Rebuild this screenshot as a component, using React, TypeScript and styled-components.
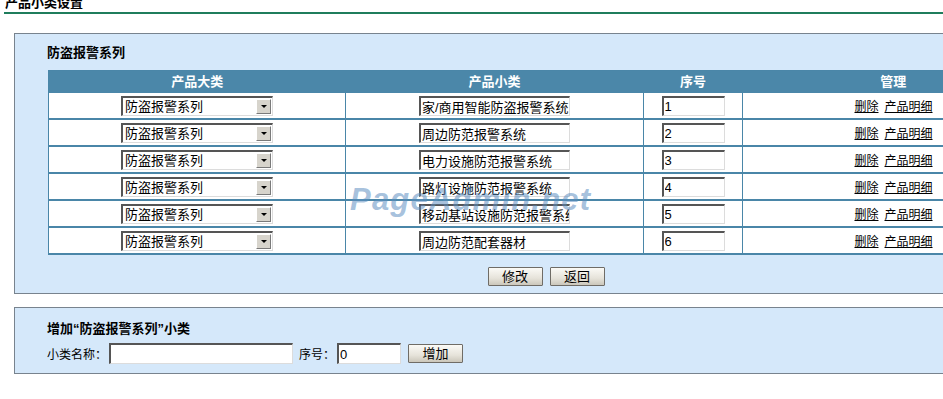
import React from 'react';
import styled, { createGlobalStyle } from 'styled-components';

const GlobalStyle = createGlobalStyle`
  html, body {
    margin: 0;
    padding: 0;
    overflow: hidden;
    background: #ffffff;
  }
  body {
    font-family: "Liberation Sans", "Noto Sans CJK SC", sans-serif;
    font-size: 12px;
    color: #000;
  }
`;

const Page = styled.div`
  width: 1100px;
  position: relative;
`;

const PageTitle = styled.div`
  margin-left: 4px;
  height: 12px;
  border-bottom: 2px solid #1f7d5c;
  font-size: 13px;
  font-weight: bold;
  line-height: 12px;
  overflow: hidden;

  span {
    display: block;
    margin-top: -3px;
    margin-left: 1px;
  }
`;

const Panel = styled.div<{ $top: number; $padTop: number; $padBottom: number }>`
  position: relative;
  margin: ${(p) => p.$top}px 0 0 14px;
  width: 1062px;
  border: 1px solid #78838e;
  background: #d5e8fa;
  padding: ${(p) => p.$padTop}px 32px ${(p) => p.$padBottom}px 32px;
  box-sizing: content-box;
`;

const PanelInner = styled.div`
  width: 996px;
  margin-left: 1px;
`;

const SectionTitle = styled.div`
  font-size: 13px;
  font-weight: bold;
  line-height: 13px;
  height: 13px;
  margin-left: -1px;
`;

const Grid = styled.table`
  margin-top: 11px;
  width: 996px;
  table-layout: fixed;
  border-collapse: collapse;
  background: #ffffff;
  border: 1px solid #4a86a8;
`;

const HeadCell = styled.th`
  height: 22px;
  padding: 0;
  background: #4b87a9;
  color: #ffffff;
  font-size: 13px;
  font-weight: bold;
  text-align: center;
  vertical-align: middle;
  line-height: 22px;
`;

const Cell = styled.td<{ $last?: boolean }>`
  height: 25px;
  padding: 0;
  text-align: center;
  vertical-align: middle;
  border-bottom: 2px solid #4a86a8;
  border-right: ${(p) => (p.$last ? 'none' : '1px solid #4a86a8')};
`;

const TextBox = styled.input<{ $w: number }>`
  width: ${(p) => p.$w}px;
  height: 20px;
  box-sizing: border-box;
  margin: 0;
  padding: 0 0 0 1px;
  font-family: "Liberation Sans", "Noto Sans CJK SC", sans-serif;
  font-size: 13px;
  color: #000;
  background: #ffffff;
  border-style: solid;
  border-width: 2px 1px 1px 2px;
  border-color: #555555 #dcdcdc #dcdcdc #555555;
  outline: none;
  vertical-align: middle;
`;

const SelectBox = styled.div`
  display: inline-flex;
  align-items: stretch;
  width: 152px;
  height: 20px;
  box-sizing: border-box;
  border-style: solid;
  border-width: 2px 1px 1px 2px;
  border-color: #555555 #dcdcdc #dcdcdc #555555;
  background: #ffffff;
  vertical-align: middle;
  text-align: left;
`;

const SelectText = styled.span`
  flex: 1;
  padding-left: 2px;
  font-size: 13px;
  line-height: 17px;
  white-space: nowrap;
  overflow: hidden;
`;

const SelectArrow = styled.span`
  width: 15px;
  margin: 1px;
  background: #d7d4cc;
  border-style: solid;
  border-width: 1px;
  border-color: #ffffff #7a7a7a #7a7a7a #ffffff;
  box-sizing: border-box;
  display: flex;
  align-items: center;
  justify-content: center;

  &::after {
    content: '';
    border-left: 3px solid transparent;
    border-right: 3px solid transparent;
    border-top: 3px solid #000;
  }
`;

const Link = styled.a`
  color: #000;
  text-decoration: underline;
  font-size: 12px;
  cursor: pointer;
  margin: 0 3px;
`;

const ButtonRow = styled.div`
  margin-top: 12px;
  display: flex;
  justify-content: center;
  gap: 7px;
`;

const Button = styled.button<{ $h?: number; $gap?: number }>`
  width: 55px;
  height: ${(p) => p.$h ?? 19}px;
  margin: 0 0 0 ${(p) => p.$gap ?? 0}px;
  padding: 0;
  box-sizing: border-box;
  font-family: "Liberation Sans", "Noto Sans CJK SC", sans-serif;
  font-size: 13px;
  line-height: 1;
  color: #000;
  background: linear-gradient(#fbfaf6, #e6e3da 60%, #cbc7bb);
  border: 1px solid #6f6c66;
  border-radius: 1px;
  cursor: pointer;
`;

const FormRow = styled.div`
  margin-top: 8px;
  display: flex;
  align-items: center;
  height: 21px;
  margin-left: -1px;
`;

const Label = styled.span<{ $gap?: number }>`
  font-size: 12px;
  margin-left: ${(p) => p.$gap ?? 0}px;
  margin-right: 2px;
  white-space: nowrap;
`;

const FormInput = styled(TextBox)`
  height: 21px;
`;

const Watermark = styled.div`
  position: absolute;
  left: 335px;
  top: 148px;
  font-family: "Liberation Sans", Arial, sans-serif;
  font-size: 31px;
  font-weight: bold;
  font-style: italic;
  letter-spacing: 1.2px;
  color: rgba(92, 142, 192, 0.55);
  pointer-events: none;
  white-space: nowrap;
`;

const rows = [
  { name: '家/商用智能防盗报警系统', order: '1' },
  { name: '周边防范报警系统', order: '2' },
  { name: '电力设施防范报警系统', order: '3' },
  { name: '路灯设施防范报警系统', order: '4' },
  { name: '移动基站设施防范报警系统', order: '5' },
  { name: '周边防范配套器材', order: '6' },
];

export default function App() {
  return (
    <Page>
      <GlobalStyle />
      <PageTitle>
        <span>产品小类设置</span>
      </PageTitle>

      <Panel $top={19} $padTop={12} $padBottom={7}>
        <PanelInner>
          <SectionTitle>防盗报警系列</SectionTitle>
          <Grid>
            <colgroup>
              <col style={{ width: 297 }} />
              <col style={{ width: 298 }} />
              <col style={{ width: 99 }} />
              <col style={{ width: 302 }} />
            </colgroup>
            <thead>
              <tr>
                <HeadCell>产品大类</HeadCell>
                <HeadCell>产品小类</HeadCell>
                <HeadCell>序号</HeadCell>
                <HeadCell>管理</HeadCell>
              </tr>
            </thead>
            <tbody>
              {rows.map((r) => (
                <tr key={r.order}>
                  <Cell>
                    <SelectBox>
                      <SelectText>防盗报警系列</SelectText>
                      <SelectArrow />
                    </SelectBox>
                  </Cell>
                  <Cell>
                    <TextBox $w={151} defaultValue={r.name} />
                  </Cell>
                  <Cell>
                    <TextBox $w={63} defaultValue={r.order} />
                  </Cell>
                  <Cell $last>
                    <Link>删除</Link>
                    <Link>产品明细</Link>
                  </Cell>
                </tr>
              ))}
            </tbody>
          </Grid>
          <ButtonRow>
            <Button>修改</Button>
            <Button>返回</Button>
          </ButtonRow>
        </PanelInner>
        <Watermark>PageAdmin.net</Watermark>
      </Panel>

      <Panel $top={13} $padTop={14} $padBottom={9}>
        <PanelInner>
          <SectionTitle>增加“防盗报警系列”小类</SectionTitle>
          <FormRow>
            <Label>小类名称：</Label>
            <FormInput $w={184} />
            <Label $gap={6}>序号：</Label>
            <FormInput $w={64} defaultValue="0" />
            <Button $h={19} $gap={7}>增加</Button>
          </FormRow>
        </PanelInner>
      </Panel>
    </Page>
  );
}
